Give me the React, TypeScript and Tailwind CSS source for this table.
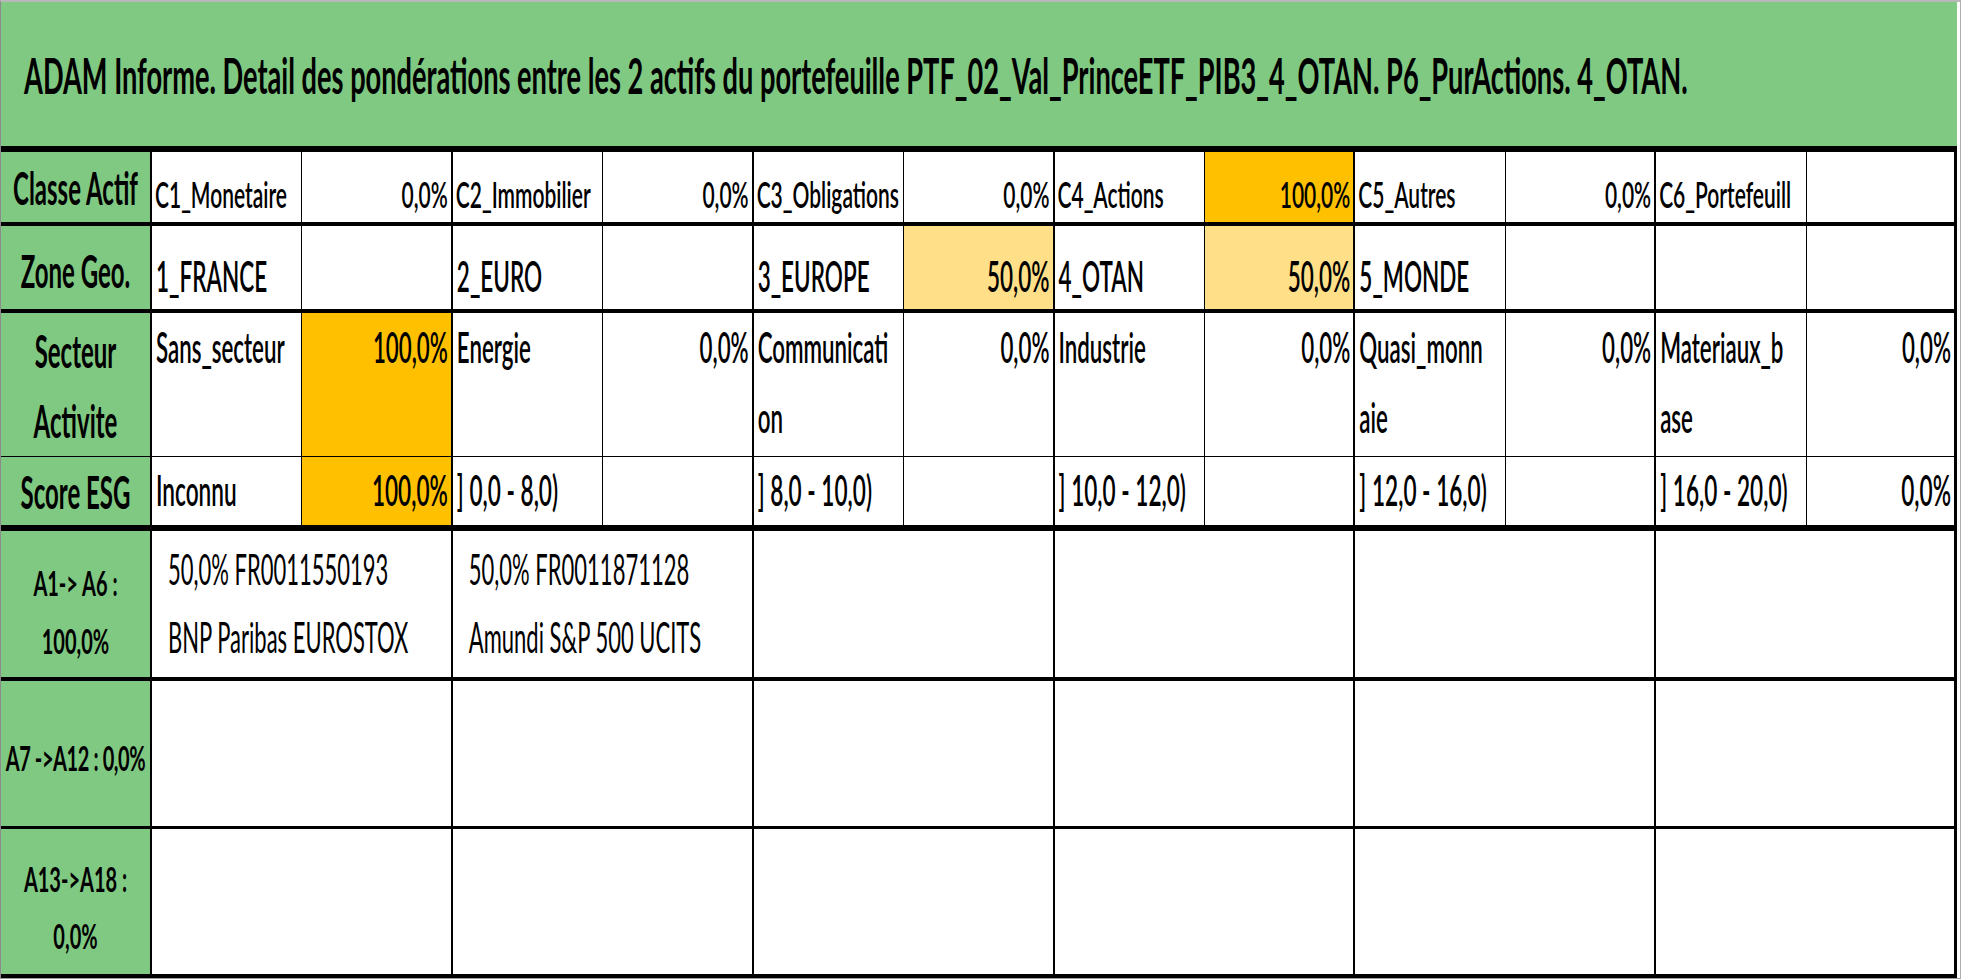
import React from "react";

function T({ c, className = "" }: { c: string; className?: string }) {
  return (
    <span className={`inline-block whitespace-nowrap leading-none origin-center ${className}`}>
      {c}
    </span>
  );
}

const GREEN = "bg-[#80c982]";

type Pair = { l: string[]; v: string; bg?: string };

const row1: Pair[] = [
  { l: ["C1_Monetaire"], v: "0,0%" },
  { l: ["C2_Immobilier"], v: "0,0%" },
  { l: ["C3_Obligations"], v: "0,0%" },
  { l: ["C4_Actions"], v: "100,0%", bg: "bg-[#ffc000]" },
  { l: ["C5_Autres"], v: "0,0%" },
  { l: ["C6_Portefeuill"], v: "" },
];
const row2: Pair[] = [
  { l: ["1_FRANCE"], v: "" },
  { l: ["2_EURO"], v: "" },
  { l: ["3_EUROPE"], v: "50,0%", bg: "bg-[#ffdf88]" },
  { l: ["4_OTAN"], v: "50,0%", bg: "bg-[#ffdf88]" },
  { l: ["5_MONDE"], v: "" },
  { l: [""], v: "" },
];
const row3: Pair[] = [
  { l: ["Sans_secteur"], v: "100,0%", bg: "bg-[#ffc000]" },
  { l: ["Energie"], v: "0,0%" },
  { l: ["Communicati", "on"], v: "0,0%" },
  { l: ["Industrie"], v: "0,0%" },
  { l: ["Quasi_monn", "aie"], v: "0,0%" },
  { l: ["Materiaux_b", "ase"], v: "0,0%" },
];
const row4: Pair[] = [
  { l: ["Inconnu"], v: "100,0%", bg: "bg-[#ffc000]" },
  { l: ["] 0,0 - 8,0)"], v: "" },
  { l: ["] 8,0 - 10,0)"], v: "" },
  { l: ["] 10,0 - 12,0)"], v: "" },
  { l: ["] 12,0 - 16,0)"], v: "" },
  { l: ["] 16,0 - 20,0)"], v: "0,0%" },
];

const GRID = "grid grid-cols-[151px_repeat(12,minmax(0,1fr))]";

function PairCells({
  pairs,
  textCls,
  labelCls,
  valueCls,
}: {
  pairs: Pair[];
  textCls: string;
  labelCls: string;
  valueCls: string;
}) {
  return (
    <>
      {pairs.map((p, i) => (
        <React.Fragment key={i}>
          <div className={`border-r border-black overflow-hidden bg-white ${labelCls}`}>
            {p.l.map((line, j) => (
              <div key={j} className="flex items-center">
                {line ? <T c={line} className={textCls} /> : null}
              </div>
            ))}
          </div>
          <div
            className={`${i === 5 ? "border-r-[3px]" : "border-r-2"} border-black flex justify-end pr-[3px] ${
              p.bg ?? "bg-white"
            } ${valueCls}`}
          >
            {p.v ? <T c={p.v} className={textCls} /> : null}
          </div>
        </React.Fragment>
      ))}
    </>
  );
}

function Label({ lines, cls, lineCls, size }: { lines: string[]; cls: string; lineCls: string; size: string }) {
  return (
    <div className={`${GREEN} border-r-2 border-black flex flex-col items-center text-center ${cls}`}>
      {lines.map((l, i) => (
        <div key={i} className={`flex items-center justify-center ${lineCls}`}>
          <T c={l} className={`font-bold ${size}`} />
        </div>
      ))}
    </div>
  );
}

function AssetRow({
  label,
  labelCls,
  labelLine,
  labelSize,
  h,
  items,
}: {
  label: string[];
  labelCls: string;
  labelLine: string;
  labelSize: string;
  h: string;
  items: string[][];
}) {
  return (
    <div className={`${GRID} ${h} border-black`}>
      <Label lines={label} cls={labelCls} lineCls={labelLine} size={labelSize} />
      {Array.from({ length: 6 }).map((_, i) => (
        <div
          key={i}
          className={`col-span-2 ${i === 5 ? "border-r-[3px]" : "border-r-2"} border-black bg-white flex flex-col justify-center pl-4`}
        >
          {(items[i] ?? []).map((line, j) => (
            <div key={j} className="h-[68px] flex items-center">
              <T c={line} className="text-[22px] font-normal scale-y-[1.9]" />
            </div>
          ))}
        </div>
      ))}
    </div>
  );
}

export default function App() {
  return (
    <div className="w-[1961px] h-[979px] bg-white font-['Lato','Liberation_Sans',sans-serif] text-black border-t-2 border-t-[#b8b8b8] border-l border-l-[#8c8c8c] border-b border-b-[#9a9a9a] border-r border-r-[#b0b0b0] overflow-hidden">
      <div className="w-[1956px] flex flex-col">
        {/* Title */}
        <div className={`${GREEN} h-[150px] border-b-[6px] border-black flex items-center pl-[23px] pt-[4px]`}>
          <T
            c="ADAM Informe. Detail des pondérations entre les 2 actifs du portefeuille PTF_02_Val_PrinceETF_PIB3_4_OTAN. P6_PurActions. 4_OTAN."
            className="text-[27.2px] font-bold scale-y-[1.8]"
          />
        </div>

        {/* Classe Actif */}
        <div className={`${GRID} h-[74px] border-b-4 border-black`}>
          <Label lines={["Classe Actif"]} cls="justify-center pt-[2px]" lineCls="" size="text-[24px] scale-y-[1.9]" />
          <PairCells
            pairs={row1}
            textCls="text-[21px] font-semibold scale-y-[1.78]"
            labelCls="flex flex-col justify-center pl-[3px] pt-[10px]"
            valueCls="items-center pt-[10px]"
          />
        </div>

        {/* Zone Geo. */}
        <div className={`${GRID} h-[87px] border-b-4 border-black`}>
          <Label lines={["Zone Geo."]} cls="justify-center pt-[6px]" lineCls="" size="text-[24px] scale-y-[1.9]" />
          <PairCells
            pairs={row2}
            textCls="text-[22.5px] font-semibold scale-y-[1.9]"
            labelCls="flex flex-col justify-center pl-[4px] pt-[20px]"
            valueCls="items-center pt-[20px]"
          />
        </div>

        {/* Secteur Activite */}
        <div className={`${GRID} h-[144px] border-b-4 border-black`}>
          <Label
            lines={["Secteur", "Activite"]}
            cls="justify-start pt-[3px]"
            lineCls="h-[70px]"
            size="text-[24px] scale-y-[1.9]"
          />
          <PairCells
            pairs={row3}
            textCls="text-[22.3px] font-semibold scale-y-[1.9]"
            labelCls="flex flex-col justify-start pl-[4px] [&>div]:h-[70px]"
            valueCls="items-start [&>span]:mt-[24px]"
          />
        </div>

        {/* Score ESG */}
        <div className={`${GRID} h-[74px] border-b-[6px] border-black`}>
          <Label lines={["Score ESG"]} cls="justify-center pt-[2px]" lineCls="" size="text-[24px] scale-y-[1.9]" />
          <PairCells
            pairs={row4}
            textCls="text-[22.6px] font-semibold scale-y-[1.88]"
            labelCls="flex flex-col justify-center pl-[4px]"
            valueCls="items-center"
          />
        </div>

        <AssetRow
          label={["A1-> A6 :", "100,0%"]}
          labelCls="justify-center pt-[14px]"
          labelLine="h-[58px]"
          labelSize="text-[20px] scale-y-[1.75]"
          h="h-[150px] border-b-4"
          items={[
            ["50,0% FR0011550193", "BNP Paribas EUROSTOX"],
            ["50,0% FR0011871128", "Amundi S&P 500 UCITS"],
          ]}
        />
        <AssetRow
          label={["A7 ->A12 : 0,0%"]}
          labelCls="justify-center pt-[7px]"
          labelLine=""
          labelSize="text-[20px] tracking-[-0.4px] scale-y-[1.75]"
          h="h-[148px] border-b-[3px]"
          items={[]}
        />
        <AssetRow
          label={["A13->A18 :", "0,0%"]}
          labelCls="justify-center pt-[10px]"
          labelLine="h-[57px]"
          labelSize="text-[20px] scale-y-[1.75]"
          h="h-[149px] border-b-4"
          items={[]}
        />
      </div>
    </div>
  );
}
